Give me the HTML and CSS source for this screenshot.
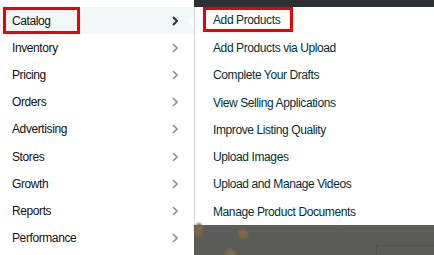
FILE: index.html
```html
<!DOCTYPE html>
<html lang="en">
<head>
    <meta charset="UTF-8">
    <meta name="viewport" content="width=device-width, initial-scale=1.0">
    <title>Menu</title>
    <link rel="stylesheet" href="styles.css">
</head>
<body>

<div class="page">
    <ul class="nav">
        <li class="nav-item active"><span class="mark">Catalog</span><svg class="chev" viewBox="0 0 6 10"><polyline points="1,1 5,5 1,9"/></svg></li>
        <li class="nav-item"><span>Inventory</span><svg class="chev" viewBox="0 0 6 10"><polyline points="1,1 5,5 1,9"/></svg></li>
        <li class="nav-item"><span>Pricing</span><svg class="chev" viewBox="0 0 6 10"><polyline points="1,1 5,5 1,9"/></svg></li>
        <li class="nav-item"><span>Orders</span><svg class="chev" viewBox="0 0 6 10"><polyline points="1,1 5,5 1,9"/></svg></li>
        <li class="nav-item"><span>Advertising</span><svg class="chev" viewBox="0 0 6 10"><polyline points="1,1 5,5 1,9"/></svg></li>
        <li class="nav-item"><span>Stores</span><svg class="chev" viewBox="0 0 6 10"><polyline points="1,1 5,5 1,9"/></svg></li>
        <li class="nav-item"><span>Growth</span><svg class="chev" viewBox="0 0 6 10"><polyline points="1,1 5,5 1,9"/></svg></li>
        <li class="nav-item"><span>Reports</span><svg class="chev" viewBox="0 0 6 10"><polyline points="1,1 5,5 1,9"/></svg></li>
        <li class="nav-item"><span>Performance</span><svg class="chev" viewBox="0 0 6 10"><polyline points="1,1 5,5 1,9"/></svg></li>
    </ul>

    <div class="side">
        <div class="topbar"></div>
        <ul class="submenu">
            <li class="sub-item"><span class="mark-sub">Add Products</span></li>
            <li class="sub-item">Add Products via Upload</li>
            <li class="sub-item">Complete Your Drafts</li>
            <li class="sub-item">View Selling Applications</li>
            <li class="sub-item">Improve Listing Quality</li>
            <li class="sub-item">Upload Images</li>
            <li class="sub-item">Upload and Manage Videos</li>
            <li class="sub-item">Manage Product Documents</li>
        </ul>
        <div class="backdrop">
            <!-- page behind the overlay -->
            <span class="dot dot1"></span>
            <span class="dot dot2"></span>
            <span class="dot dot3"></span>
            <span class="box"></span>
        </div>
    </div>
</div>

</body>
</html>
```

FILE: styles.css
```css
body {
    margin: 0;
    font-family: "Liberation Sans", Arial, sans-serif;
    font-size: 12px;
    letter-spacing: -0.4px;
    background: #5b5c5a;
}
ul {
    list-style: none;
    margin: 0;
    padding: 0;
}
.page {
    display: flex;
    height: 255px;
    overflow: hidden;
}
.nav {
    width: 194px;
    flex: none;
    background: #fff;
    padding-top: 7px;
}
.nav-item {
    position: relative;
    display: flex;
    align-items: center;
    justify-content: space-between;
    height: 27.2px;
    padding: 0 16px 0 12px;
    color: #0f1111;
}
.nav-item.active {
    background: #f3f6f6;
}
.nav-item.active::after {
    content: "";
    position: absolute;
    right: 0;
    top: 8px;
    border-top: 6px solid transparent;
    border-bottom: 6px solid transparent;
    border-right: 6px solid #fff;
}
.mark {
    display: flex;
    align-items: center;
    box-sizing: border-box;
    width: 77px;
    height: 27px;
    margin-left: -9px;
    padding-left: 6px;
    border: 3px solid #ee0000;
}
.chev {
    width: 6px;
    height: 10px;
    fill: none;
    stroke: #8d9096;
    stroke-width: 1.6;
}
.active .chev {
    stroke: #232f3e;
    stroke-width: 2;
}
.side {
    flex: 1;
    display: flex;
    flex-direction: column;
}
.topbar {
    height: 7px;
    background: #2b3034;
}
.submenu {
    background: #fff;
    border-left: 1px solid #d5d9d9;
    height: 218px;
    padding-left: 18px;
}
.sub-item {
    display: flex;
    align-items: center;
    height: 27.3px;
    color: #002f36;
}
.mark-sub {
    display: flex;
    align-items: center;
    box-sizing: border-box;
    width: 90px;
    height: 25px;
    margin-left: -10px;
    margin-top: -2px;
    padding-left: 7px;
    border: 3px solid #ee0000;
}
.backdrop {
    position: relative;
    flex: 1;
    background: #5b5c5a;
}
.dot {
    position: absolute;
    width: 10px;
    height: 10px;
    border-radius: 50%;
    background: #7b6a45;
    filter: blur(1px);
}
.dot1 {
    left: 1px;
    top: -2px;
    height: 14px;
    width: 8px;
}
.dot2 {
    left: 44px;
    top: 4px;
}
.dot3 {
    left: 31px;
    top: 24px;
}
.box {
    position: absolute;
    left: 182px;
    top: 20px;
    width: 80px;
    height: 30px;
    border: 1px solid #4f504f;
}
```
